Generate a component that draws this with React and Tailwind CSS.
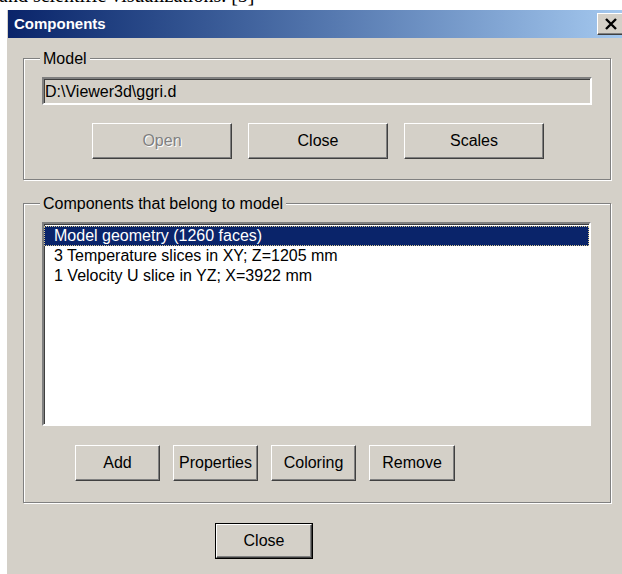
import React from "react";

const sans = "font-['Liberation_Sans',Arial,sans-serif]";

// raised 3D push button, classic style
const Button = ({ label, disabled, isDefault, width }) => {
  const face = (
    <div className="flex h-full w-full items-center justify-center border border-[#404040] border-t-white border-l-white bg-[#D4D0C8] shadow-[inset_-1px_-1px_0_#808080]">
      <span
        className={
          disabled
            ? "text-[#808080] [text-shadow:1px_1px_0_#fff]"
            : "text-black"
        }
      >
        {label}
      </span>
    </div>
  );
  return (
    <div
      className={`h-[36px] shrink-0 ${width} ${isDefault ? "border border-black" : ""}`}
    >
      {face}
    </div>
  );
};

const GroupBox = ({ title, className, children }) => (
  <div
    className={`relative border border-[#808080] shadow-[inset_1px_1px_0_#fff,1px_1px_0_#fff] ${className}`}
  >
    <span className="absolute -top-[9px] left-[16px] bg-[#D4D0C8] px-[3px] leading-[18px] text-black">
      {title}
    </span>
    {children}
  </div>
);

const rows = [
  "Model geometry (1260 faces)",
  "3 Temperature slices in XY; Z=1205 mm",
  "1 Velocity U slice in YZ; X=3922 mm",
];

export default function App() {
  return (
    <div className={`h-[574px] w-[622px] overflow-hidden bg-white ${sans} text-[16px]`}>
      {/* bit of the article text above the dialog */}
      <div className="h-[8px] overflow-hidden">
        <div className="-mt-[15px] -ml-[1px] whitespace-nowrap font-['Liberation_Serif',serif] text-[20px] leading-[20px] text-black">
          and scientific visualizations. [5]
        </div>
      </div>

      <div className="ml-[5px] h-[600px] w-[640px] border-t-2 border-l-2 border-white bg-[#D4D0C8] pl-[1px]">
        {/* title bar */}
        <div className="flex h-[28px] w-[620px] items-center bg-gradient-to-r from-[#0A246A] to-[#A6CAF0] pl-[6px]">
          <span className="text-[15px] font-bold text-white">Components</span>
          <div className="mr-[3px] ml-auto h-[22px] w-[28px] border border-[#404040] border-t-white border-l-white bg-[#D4D0C8] shadow-[inset_-1px_-1px_0_#808080]">
            <div className="flex h-full w-full items-center justify-center pr-[1px]">
              <svg width="12" height="12" viewBox="0 0 12 12">
                <path d="M1 1 L11 11 M11 1 L1 11" stroke="#000" strokeWidth="2.4" />
              </svg>
            </div>
          </div>
        </div>

        <div className="flex flex-col pl-[15px]">
          <GroupBox title="Model" className="mt-[20px] w-[588px] px-[18px] pt-[18px] pb-[20px]">
            <div className="flex h-[28px] w-[550px] items-center border-2 border-[#808080] border-r-white border-b-white bg-[#D4D0C8] pl-[1px] shadow-[inset_1px_1px_0_#404040]">
              <span className="pt-[2px]">D:\Viewer3d\ggri.d</span>
            </div>
            <div className="mt-[18px] flex justify-center gap-[16px] pl-[2px]">
              <Button label="Open" disabled width="w-[140px]" />
              <Button label="Close" width="w-[140px]" />
              <Button label="Scales" width="w-[140px]" />
            </div>
          </GroupBox>

          <GroupBox
            title="Components that belong to model"
            className="mt-[23px] w-[588px] px-[18px] pt-[18px] pb-[21px]"
          >
            <div className="h-[204px] w-[549px] border-2 border-[#808080] border-r-white border-b-white bg-white pt-[2px] shadow-[inset_1px_1px_0_#404040]">
              {rows.map((r, i) => (
                <div
                  key={r}
                  className={
                    i === 0
                      ? "flex h-[20px] items-center border border-dotted border-[#d8c890] bg-[#0A246A] pl-[9px] text-white"
                      : "flex h-[20px] items-center pl-[10px] text-black"
                  }
                >
                  {r}
                </div>
              ))}
            </div>
            <div className="mt-[19px] ml-[33px] flex gap-[13px]">
              <Button label="Add" width="w-[85px]" />
              <Button label="Properties" width="w-[85px]" />
              <Button label="Coloring" width="w-[85px]" />
              <Button label="Remove" width="w-[86px]" />
            </div>
          </GroupBox>

          <div className="mt-[20px] ml-[192px]">
            <Button label="Close" isDefault width="w-[98px]" />
          </div>
        </div>
      </div>
    </div>
  );
}
